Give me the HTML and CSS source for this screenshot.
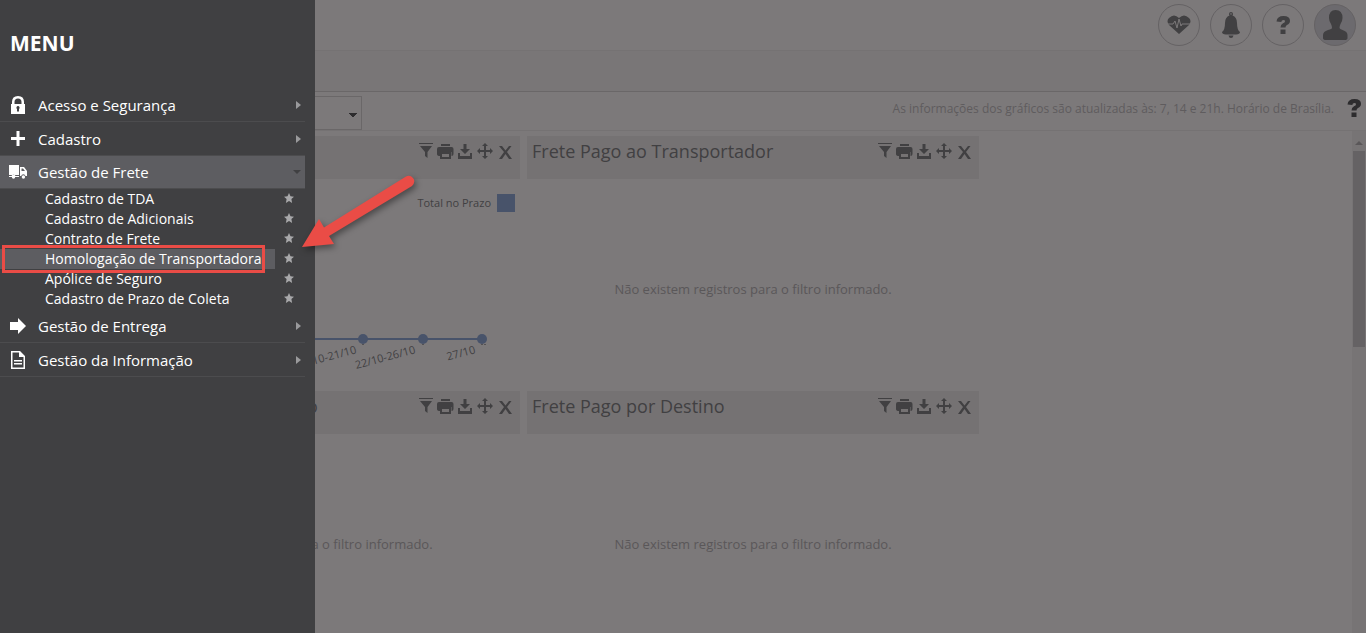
FILE: index.html
```
<!DOCTYPE html>
<html lang="pt-BR">
<head>
    <meta charset="UTF-8">
    <meta name="viewport" content="width=device-width, initial-scale=1.0">
    <title>Painel de Gestão de Frete</title>
    <link rel="stylesheet" href="styles.css">
</head>
<body>
    <!-- Ícones reutilizados -->
    <svg class="sprite" aria-hidden="true">
        <symbol id="i-filtro" viewBox="0 0 16 16"><path d="M2 0h14v1H2zM3 3h12L10.500 9v6L8 13V9z"/></symbol>
        <symbol id="i-imprimir" viewBox="0 0 18 16"><path d="M5 1h9v2H5zM3 4h12.500q2 0 2 2v5q0 2-2 2v-4H4v4q-3 0-3-2V6q0-2 2-2zM4 9h11v7H4zM6 11v3h7v-3z" fill-rule="evenodd"/></symbol>
        <symbol id="i-baixar" viewBox="0 0 16 16"><path d="M6.500 1h3v5H13l-5 5-5-5h3.500zM1 10h2v3h10v-3h2v6H1z"/></symbol>
        <symbol id="i-mover" viewBox="0 0 16 16"><path d="M8 0l3 3H9v4h4V5l3 3-3 3V9H9v4h2l-3 3-3-3h2V9H3v2L0 8l3-3v2h4V3H5z"/></symbol>
        <symbol id="i-fechar" viewBox="0 0 16 16"><path d="M2 3h3l3.500 4.500L12 3h2.500L10 9l5 7h-3l-3.500-5L5 16H2l5-7z"/></symbol>
        <symbol id="i-ajuda" viewBox="0 0 16 18"><path d="M1.500 5.500Q2 0 8.500 0 15 0 15 4.800q0 3-3 4.300-1.500.8-1.500 2.400h-5q0-3 2.500-4.300Q10 6.500 10 5.200 10 4 8.500 4 6.500 4 6.300 6zM5.500 13.500h5V18h-5z"/></symbol>
        <symbol id="i-estrela" viewBox="0 0 10 10"><path d="M5 0l1.500 3.300 3.500.4-2.600 2.400.7 3.900L5 8 1.900 10l.7-3.900L0 3.700l3.500-.4z"/></symbol>
    </svg>

    <div class="pagina">
        <header class="topo">
            <button class="redondo" aria-label="Monitoramento"><svg width="24" height="20" viewBox="0 0 24 20"><path d="M12 19L2 10Q-1 6 2 3q5-5 10 0 5-5 10 0 3 3 0 7z"/><path class="pulso" d="M1 9h5l2-3 2 7 2-9 2 7 1-2h8"/></svg></button>
            <button class="redondo" aria-label="Notificações"><svg width="20" height="28" viewBox="0 0 20 28"><path fill-rule="evenodd" d="M10 1q2 0 2 2 0 1-.6 1.500Q16 6 16 12q0 7 3 9 0 2-4 2.500H5Q1 23 1 21q3-2 3-9 0-6 4.600-7.500Q8 4 8 3q0-2 2-2zm0 1.300a.7.7 0 1 0 .01 0zM7.500 24.500h5Q12 27 10 27t-2.500-2.500z"/></svg></button>
            <button class="redondo" aria-label="Ajuda"><svg width="16" height="18"><use href="#i-ajuda"/></svg></button>
            <button class="redondo perfil" aria-label="Perfil"><svg width="26" height="32" viewBox="0 0 26 32"><path d="M13.500 1q7 0 7 8 0 3-2 6-1 2-1 4 0 1 3 2 5 1.500 5 5v3q0 2-3 2H4q-3 0-3-2v-3q0-3.500 5-5 4-1 4-2 0-2-1-4-2-3-2-6 0-8 6.500-8z"/></svg></button>
        </header>
        <div class="barra"></div>
        <div class="filtros">
            <select class="seletor" aria-label="Filtro"><option></option></select>
            <p class="aviso">As informações dos gráficos são atualizadas às: 7, 14 e 21h. Horário de Brasília.</p>
            <button class="ajuda" aria-label="Ajuda dos gráficos"><svg width="16" height="18"><use href="#i-ajuda"/></svg></button>
        </div>

        <div class="conteudo">
            <main class="grade">
                <section class="painel">
                    <div class="painel-topo">
                        <div class="acoes">
                            <button aria-label="Filtrar"><svg width="16" height="16"><use href="#i-filtro"/></svg></button>
                            <button aria-label="Imprimir"><svg width="18" height="16"><use href="#i-imprimir"/></svg></button>
                            <button aria-label="Baixar"><svg width="16" height="16"><use href="#i-baixar"/></svg></button>
                            <button aria-label="Mover"><svg width="16" height="16"><use href="#i-mover"/></svg></button>
                            <button aria-label="Fechar"><svg width="16" height="16"><use href="#i-fechar"/></svg></button>
                        </div>
                    </div>
                    <div class="grafico">
                        <div class="legenda">Total no Prazo <span class="cor"></span></div>
                        <svg class="linha" width="452" height="60" viewBox="68 324 452 60">
                            <path class="eixo" d="M250 339h232"/>
                            <circle cx="363" cy="339" r="5"/>
                            <circle cx="423" cy="339" r="5"/>
                            <circle cx="482" cy="339" r="5"/>
                            <path class="marca" d="M363 344v1M423 344v1M482 344v1M485 344v1"/>
                            <text transform="translate(357 353) rotate(-15)">10-21/10</text>
                            <text transform="translate(416 353) rotate(-15)">22/10-26/10</text>
                            <text transform="translate(476 353) rotate(-15)">27/10</text>
                        </svg>
                    </div>
                </section>

                <section class="painel">
                    <div class="painel-topo">
                        <h2>Frete Pago ao Transportador</h2>
                        <div class="acoes">
                            <button aria-label="Filtrar"><svg width="16" height="16"><use href="#i-filtro"/></svg></button>
                            <button aria-label="Imprimir"><svg width="18" height="16"><use href="#i-imprimir"/></svg></button>
                            <button aria-label="Baixar"><svg width="16" height="16"><use href="#i-baixar"/></svg></button>
                            <button aria-label="Mover"><svg width="16" height="16"><use href="#i-mover"/></svg></button>
                            <button aria-label="Fechar"><svg width="16" height="16"><use href="#i-fechar"/></svg></button>
                        </div>
                    </div>
                    <p class="vazio">Não existem registros para o filtro informado.</p>
                </section>

                <section class="painel">
                    <div class="painel-topo">
                        <h2 class="titulo-fim">o</h2>
                        <div class="acoes">
                            <button aria-label="Filtrar"><svg width="16" height="16"><use href="#i-filtro"/></svg></button>
                            <button aria-label="Imprimir"><svg width="18" height="16"><use href="#i-imprimir"/></svg></button>
                            <button aria-label="Baixar"><svg width="16" height="16"><use href="#i-baixar"/></svg></button>
                            <button aria-label="Mover"><svg width="16" height="16"><use href="#i-mover"/></svg></button>
                            <button aria-label="Fechar"><svg width="16" height="16"><use href="#i-fechar"/></svg></button>
                        </div>
                    </div>
                    <p class="vazio">Não existem registros para o filtro informado.</p>
                </section>

                <section class="painel">
                    <div class="painel-topo">
                        <h2>Frete Pago por Destino</h2>
                        <div class="acoes">
                            <button aria-label="Filtrar"><svg width="16" height="16"><use href="#i-filtro"/></svg></button>
                            <button aria-label="Imprimir"><svg width="18" height="16"><use href="#i-imprimir"/></svg></button>
                            <button aria-label="Baixar"><svg width="16" height="16"><use href="#i-baixar"/></svg></button>
                            <button aria-label="Mover"><svg width="16" height="16"><use href="#i-mover"/></svg></button>
                            <button aria-label="Fechar"><svg width="16" height="16"><use href="#i-fechar"/></svg></button>
                        </div>
                    </div>
                    <p class="vazio">Não existem registros para o filtro informado.</p>
                </section>
            </main>
            <div class="rolagem">
                <span class="seta-cima"></span>
                <span class="polegar"></span>
            </div>
        </div>
    </div>

    <!-- Menu lateral aberto sobre a página -->
    <nav class="menu">
        <h1>MENU</h1>
        <ul class="lista">
            <li>
                <a class="item" href="#"><svg width="16" height="20" viewBox="0 0 16 20"><path fill-rule="evenodd" d="M1 9h1V7q0-6 6-6t6 6v2h1v10H1zM4.500 9h7V7q0-3.500-3.500-3.500T4.500 7zM8 11a1.700 1.700 0 0 0-1 3v2.500h2V14a1.700 1.700 0 0 0-1-3z"/></svg><span>Acesso e Segurança</span><i class="seta"></i></a>
            </li>
            <li>
                <a class="item" href="#"><svg width="16" height="18" viewBox="0 0 16 18"><path d="M6.500 1h3v6H15v3H9.500v6h-3v-6H1V7h5.500z"/></svg><span>Cadastro</span><i class="seta"></i></a>
            </li>
            <li>
                <a class="item ativo" href="#"><svg width="18" height="16" viewBox="0 0 18 16"><path fill-rule="evenodd" d="M0 1h10v10H0zM11 3h4l3 4v5h-1.500a2.200 2.200 0 0 0-4.300 0H11zM12.500 4.500V7h3.500l-2-2.500zM0 12h2.500a2.200 2.200 0 0 1 4 0H10v1H0z"/><circle cx="4.500" cy="13" r="1.700"/><circle cx="14.400" cy="13" r="1.700"/></svg><span>Gestão de Frete</span><i class="seta aberta"></i></a>
                <ul class="submenu">
                    <li><a href="#">Cadastro de TDA</a><button aria-label="Favoritar"><svg width="10" height="10"><use href="#i-estrela"/></svg></button></li>
                    <li><a href="#">Cadastro de Adicionais</a><button aria-label="Favoritar"><svg width="10" height="10"><use href="#i-estrela"/></svg></button></li>
                    <li><a href="#">Contrato de Frete</a><button aria-label="Favoritar"><svg width="10" height="10"><use href="#i-estrela"/></svg></button></li>
                    <li class="destaque"><a href="#">Homologação de Transportadora</a><button aria-label="Favoritar"><svg width="10" height="10"><use href="#i-estrela"/></svg></button>
                        <svg class="flecha" width="120" height="80" viewBox="0 0 120 80"><path d="M4 74L21 46l5 8.500L108 3.500q4-2 7 1.500t-1 8L31 63l5 8z"/></svg>
                    </li>
                    <li><a href="#">Apólice de Seguro</a><button aria-label="Favoritar"><svg width="10" height="10"><use href="#i-estrela"/></svg></button></li>
                    <li><a href="#">Cadastro de Prazo de Coleta</a><button aria-label="Favoritar"><svg width="10" height="10"><use href="#i-estrela"/></svg></button></li>
                </ul>
            </li>
            <li>
                <a class="item" href="#"><svg width="16" height="16" viewBox="0 0 16 16"><path d="M0 4h8V0l8 8-8 8v-4H0z"/></svg><span>Gestão de Entrega</span><i class="seta"></i></a>
            </li>
            <li>
                <a class="item" href="#"><svg width="16" height="20" viewBox="0 0 16 20"><path fill-rule="evenodd" d="M1 1h9l5 5v13H1zM2.500 2.500v15h11V7H9V2.500zM4 10h8v1.500H4zM4 13h8v1.500H4z"/></svg><span>Gestão da Informação</span><i class="seta"></i></a>
            </li>
        </ul>
    </nav>
</body>
</html>
```
FILE: styles.css
```
* {
    margin: 0;
    padding: 0;
    box-sizing: border-box;
}

body {
    font-family: "Open Sans", "Noto Sans", sans-serif;
    font-size: 13px;
    background-color: #7c797a;
    color: #414042;
    overflow: hidden;
}

button {
    background: none;
    border: none;
    color: inherit;
    font: inherit;
    cursor: pointer;
}

svg {
    display: block;
    fill: currentColor;
}

.sprite {
    position: absolute;
    width: 0;
    height: 0;
}

.pagina {
    display: flex;
    flex-direction: column;
    height: 100vh;
}

/* Barra superior */
.topo {
    display: flex;
    justify-content: flex-end;
    align-items: center;
    gap: 10px;
    height: 51px;
    padding-right: 10px;
    border-bottom: 1px solid #757273;
}

.redondo {
    display: flex;
    justify-content: center;
    align-items: center;
    width: 42px;
    height: 42px;
    border: 1px solid #656264;
    border-radius: 50%;
}

.perfil {
    background-color: #6c6a6e;
}

.pulso {
    fill: none;
    stroke: #7c797a;
}

.barra {
    height: 41px;
    background-color: #797677;
    border-bottom: 1px solid #6a6768;
}

/* Filtros */
.filtros {
    display: flex;
    align-items: flex-start;
    height: 39px;
    padding: 4px 4px 0 68px;
    border-bottom: 1px solid #757273;
}

.seletor {
    width: 294px;
    height: 34px;
    border: 1px solid #6a6768;
    appearance: none;
    background: linear-gradient(45deg, transparent 50%, #2d2c2e 50%) no-repeat right 8px top 16px / 4px 4px,
        linear-gradient(-45deg, transparent 50%, #2d2c2e 50%) no-repeat right 4px top 16px / 4px 4px;
    color: inherit;
}

.aviso {
    margin-left: auto;
    padding-top: 4px;
    font-size: 12px;
    line-height: 18px;
    color: #5f5c5e;
}

.ajuda {
    margin-left: 12px;
    padding-top: 3px;
    color: #2d2c2e;
}

/* Painéis */
.conteudo {
    display: flex;
    flex: 1;
    min-height: 0;
}

.grade {
    flex: 1;
    display: grid;
    grid-template-columns: repeat(2, minmax(0, 452px));
    grid-auto-rows: 248px;
    gap: 7px;
    padding: 5px 0 0 68px;
    overflow: hidden;
}

.painel-topo {
    display: flex;
    align-items: flex-start;
    height: 43px;
    padding: 3px 5px;
    background-color: #757273;
}

.painel-topo h2 {
    font-size: 18px;
    font-weight: 400;
    line-height: 24px;
}

.titulo-fim {
    padding-left: 234px;
}

.acoes {
    display: flex;
    margin-left: auto;
    padding-top: 4px;
}

.acoes button {
    display: flex;
    justify-content: center;
    width: 20px;
}

.vazio {
    padding-top: 101px;
    line-height: 18px;
    text-align: center;
    color: #5a5759;
}

.grafico {
    padding-top: 15px;
}

.legenda {
    display: flex;
    justify-content: flex-end;
    align-items: center;
    gap: 6px;
    padding-right: 5px;
    font-size: 11px;
    line-height: 18px;
}

.cor {
    width: 18px;
    height: 18px;
    background-color: #48536a;
}

.linha {
    width: 100%;
    margin-top: 112px;
    fill: #48536a;
}

.linha text {
    font-size: 11px;
    text-anchor: end;
    fill: #414042;
}

.eixo {
    stroke: #48536a;
    stroke-width: 2;
}

.marca {
    stroke: #2d2c2e;
}

/* Barra de rolagem */
.rolagem {
    display: flex;
    flex-direction: column;
    align-items: center;
    width: 14px;
    padding-top: 10px;
    background-color: #777475;
}

.seta-cima {
    border: 4px solid transparent;
    border-top: 0;
    border-bottom-color: #5a5759;
}

.polegar {
    width: 12px;
    height: 196px;
    margin-top: 6px;
    background-color: #656264;
}

/* Menu lateral */
.menu {
    position: absolute;
    top: 0;
    left: 0;
    width: 315px;
    height: 100vh;
    padding-top: 28px;
    background-color: #404042;
    color: #fff;
}

.menu h1 {
    padding-left: 10px;
    font-size: 21px;
    line-height: 30px;
}

.menu ul {
    list-style: none;
}

.menu a {
    color: inherit;
    text-decoration: none;
}

.lista {
    width: 305px;
    margin-top: 30px;
}

.item {
    display: flex;
    align-items: center;
    height: 34px;
    padding: 0 4px 0 10px;
    border-bottom: 1px solid #4c4c4e;
    font-size: 15px;
}

.item svg {
    flex: none;
}

.item span {
    margin-left: 12px;
}

.item.ativo {
    height: 33px;
    padding-left: 9px;
    background-color: #5d5d61;
}

.item.ativo span {
    margin-left: 11px;
}

.seta {
    margin-left: auto;
    border: 4px solid transparent;
    border-left: 5px solid #9a9a9c;
    border-right: 0;
}

.seta.aberta {
    border: 4px solid transparent;
    border-top-color: #404042;
    border-bottom: 0;
}

.submenu li {
    display: flex;
    justify-content: space-between;
    position: relative;
    height: 20px;
    padding-right: 11px;
    font-size: 14px;
    line-height: 20px;
}

.submenu a {
    width: 275px;
    padding-left: 45px;
    white-space: nowrap;
}

.submenu button {
    padding-bottom: 2px;
    color: #a8a8aa;
}

.destaque a {
    background-color: #5d5d61;
}

/* Moldura vermelha sobre o item destacado */
.destaque::after {
    content: "";
    box-sizing: border-box;
    position: absolute;
    top: -4px;
    left: 2px;
    width: 263px;
    height: 28px;
    border: 3px solid #ea4c46;
}

.flecha {
    position: absolute;
    top: -76px;
    left: 298px;
    color: #ea4c46;
    filter: drop-shadow(2px 3px 3px rgba(0, 0, 0, 0.4));
}
```
